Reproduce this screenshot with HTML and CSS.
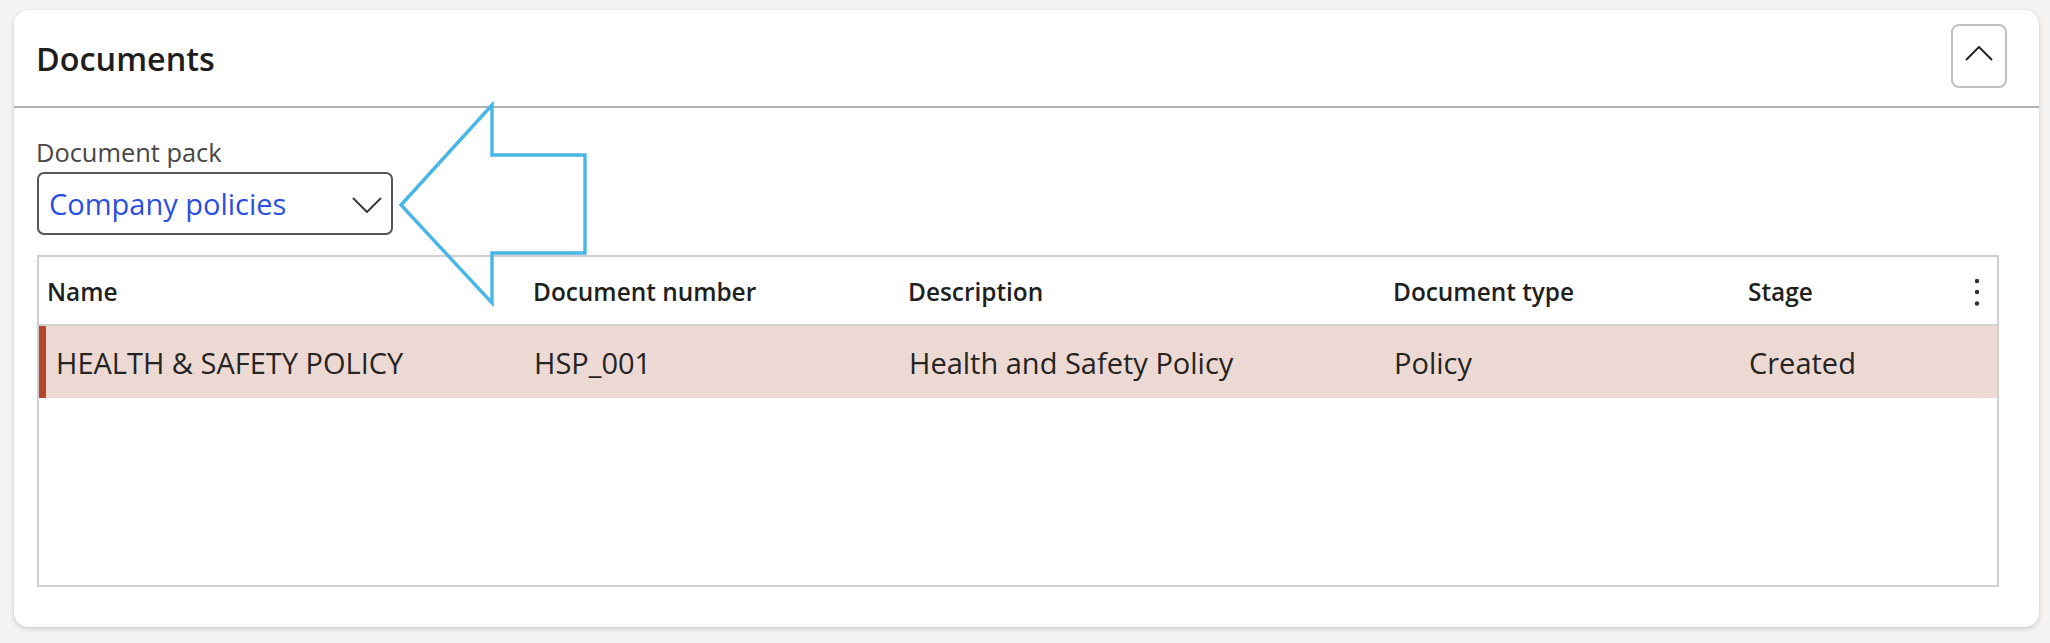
FILE: index.html
```html
<!DOCTYPE html>
<html lang="en">
<head>
<meta charset="utf-8">
<title>Documents</title>
<link rel="stylesheet" href="styles.css">
</head>
<body>
  <section class="card">
    <header class="card-header">
      <h2 class="card-title">Documents</h2>
      <button class="collapse-btn" type="button" aria-label="Collapse">
        <svg width="28" height="15" viewBox="0 0 28 15"><polyline points="1,14 14,1 27,14" fill="none" stroke="#252423" stroke-width="2"/></svg>
      </button>
    </header>
    <div class="card-body">
      <label class="field-label">Document pack</label>
      <div class="dropdown">
        <span class="dropdown-value">Company policies</span>
        <svg class="dropdown-chevron" width="30" height="16" viewBox="0 0 30 16"><polyline points="1,1 15,15 29,1" fill="none" stroke="#3b3a39" stroke-width="2"/></svg>
      </div>
      <div class="grid">
        <div class="grid-row grid-head">
          <div class="cell">Name</div>
          <div class="cell">Document number</div>
          <div class="cell">Description</div>
          <div class="cell">Document type</div>
          <div class="cell cell-last">
            <span>Stage</span>
            <svg class="more" width="6" height="28" viewBox="0 0 6 28"><circle cx="3" cy="3" r="2.2" fill="#323130"/><circle cx="3" cy="14" r="2.2" fill="#323130"/><circle cx="3" cy="25.5" r="2.2" fill="#323130"/></svg>
          </div>
        </div>
        <div class="grid-row grid-data selected">
          <div class="cell cell-first">HEALTH &amp; SAFETY POLICY</div>
          <div class="cell">HSP_001</div>
          <div class="cell">Health and Safety Policy</div>
          <div class="cell">Policy</div>
          <div class="cell">Created</div>
        </div>
      </div>
    </div>
  </section>

  <svg class="annotation-arrow" width="200" height="212" viewBox="0 0 200 212">
    <defs>
      <filter id="sketch" x="-5%" y="-5%" width="110%" height="110%">
        <feTurbulence type="fractalNoise" baseFrequency="0.9" numOctaves="1" seed="3"/>
        <feDisplacementMap in="SourceGraphic" scale="1.6"/>
      </filter>
    </defs>
    <polygon points="6,105 97,5 97,55 190,55 190,153 97,153 97,203" fill="none" stroke="#48b5e8" stroke-width="3.4" stroke-linejoin="miter" filter="url(#sketch)"/>
  </svg>
</body>
</html>
```
FILE: styles.css
```css
* { box-sizing: border-box; }

html, body {
  margin: 0;
  padding: 0;
  background: #f5f4f2;
}

body {
  position: relative;
  font-family: "Open Sans", "Noto Sans", sans-serif;
  color: #201f1e;
  padding-top: 10px;
  height: 643px;
  overflow: hidden;
}

.card {
  margin: 0 11px 0 14px;
  background: #ffffff;
  border-radius: 14px;
  box-shadow: 0 2px 5px rgba(0, 0, 0, 0.16), 0 0 1px rgba(0, 0, 0, 0.12);
}

.card-header {
  height: 98px;
  display: flex;
  align-items: center;
  justify-content: space-between;
  padding: 0 32px 0 22px;
  border-bottom: 2px solid #b2b1ad;
}

.card-title {
  margin: 0;
  font-size: 32.4px;
  font-weight: 600;
  line-height: 40px;
  color: #1f1e1d;
}

.collapse-btn {
  width: 56px;
  height: 64px;
  margin-bottom: 5px;
  display: flex;
  align-items: center;
  justify-content: center;
  background: #ffffff;
  border: 2px solid #c2c1bf;
  border-radius: 8px;
  padding: 0 0 4px 0;
}

.card-body {
  display: flex;
  flex-direction: column;
  align-items: flex-start;
  padding: 27px 40px 40px 23px;
}

.field-label {
  margin-left: -1px;
  font-size: 25.4px;
  line-height: 34px;
  color: #484644;
}

.dropdown {
  margin-top: 3px;
  width: 356px;
  height: 63px;
  display: flex;
  align-items: center;
  justify-content: space-between;
  padding: 0 9px 0 10px;
  border: 2px solid #575655;
  border-radius: 7px;
}

.dropdown-value {
  font-size: 29px;
  line-height: 40px;
  color: #2b4fe0;
}

.dropdown-chevron {
  margin-top: 2px;
}

.grid {
  margin-top: 20px;
  align-self: stretch;
  height: 332px;
  border: 2px solid #d0d0d0;
}

.grid-row {
  display: grid;
  grid-template-columns: 486px 375px 485px 355px 1fr;
  align-items: center;
}

.grid-head {
  height: 69px;
  border-bottom: 2px solid #d0d0d0;
  padding-top: 2px;
}

.grid-head .cell {
  padding-left: 8px;
  font-size: 24.4px;
  font-weight: 600;
  color: #201f1e;
  white-space: nowrap;
}

.cell-last {
  display: flex;
  align-items: center;
  justify-content: space-between;
  padding-right: 17px;
}

.more {
  display: block;
}

.grid-data {
  height: 72px;
  background: #edd9d3;
}

.grid-data .cell {
  height: 100%;
  display: flex;
  align-items: center;
  padding-left: 9px;
  font-size: 29px;
  color: #252423;
  white-space: nowrap;
}

.grid-data .cell-first {
  padding-left: 17px;
  box-shadow: inset 7px 0 0 #b4472b;
}

.annotation-arrow {
  position: absolute;
  left: 395px;
  top: 100px;
  pointer-events: none;
}
```
